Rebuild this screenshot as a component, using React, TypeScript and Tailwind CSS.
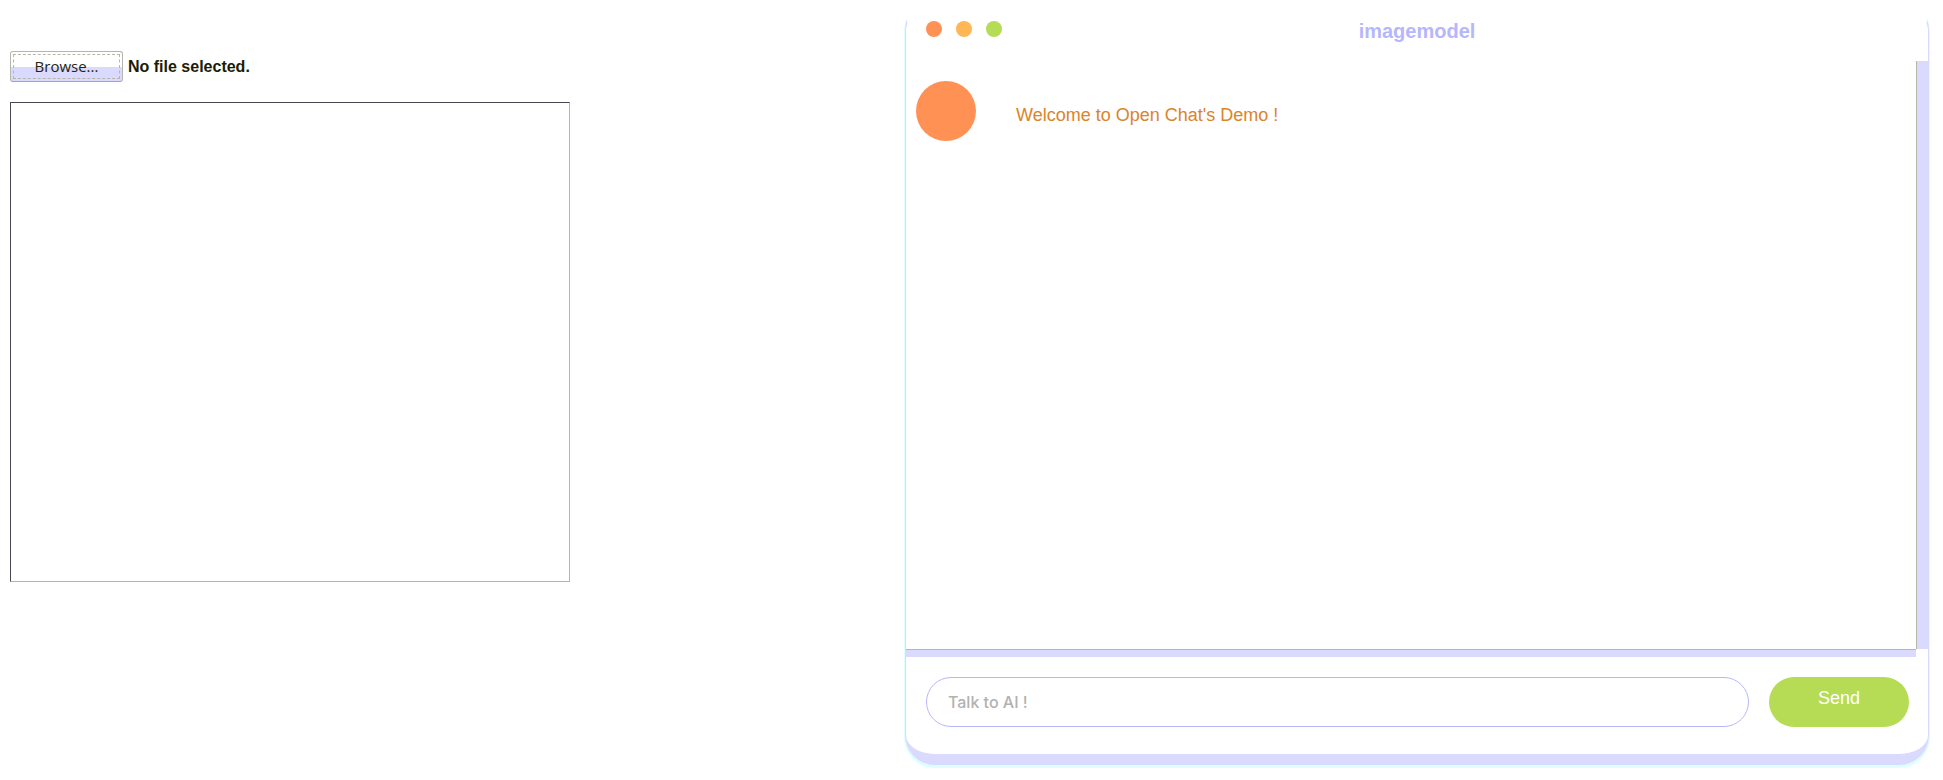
import { useRef, useState } from "react";

export default function App() {
  const fileInput = useRef<HTMLInputElement>(null);
  const [fileName, setFileName] = useState("No file selected.");
  const [message, setMessage] = useState("");

  return (
    <main className="grid min-h-screen grid-cols-[895fr_1024fr] items-start bg-white pr-[14px] pb-4 pl-[10px] font-['Liberation_Sans',sans-serif]">
      <section className="pt-[51px]">
        <div className="flex items-center gap-[5px]">
          <button
            type="button"
            onClick={() => fileInput.current?.click()}
            className="h-[31px] w-[113px] rounded-[3px] border border-[#b6b6ac] border-b-[#a2a2b8] bg-linear-to-b from-white from-50% to-[#dadaff] to-50% p-[2px] text-[#24240f]"
          >
            <span className="flex h-full items-center justify-center border border-dashed border-[#b6b6a8] font-['Open_Sans',sans-serif] text-[15px]">
              Browse...
            </span>
          </button>
          <input
            ref={fileInput}
            type="file"
            aria-label="Browse"
            className="hidden"
            onChange={(e) => setFileName(e.target.files?.[0]?.name ?? "No file selected.")}
          />
          <span className="text-[16px] font-bold text-[#1c1c04]">{fileName}</span>
        </div>
        <div className="mt-5 h-[480px] max-w-[560px] border border-t-[#484854] border-r-[#b6b6aa] border-b-[#b6b6aa] border-l-[#484854]" />
      </section>

      <section className="flex flex-col rounded-[30px] border-x border-t-10 border-b-11 border-x-[#dadaff] border-t-white border-b-[#dadaff] bg-white shadow-[0_2px_1px_1px_#dafffe]">
        <header className="grid h-[51px] grid-cols-[1fr_auto_1fr] items-start px-5">
          <div className="flex gap-[14px] pt-[11px]">
            <span className="size-4 rounded-full bg-[#ff9155]" />
            <span className="size-4 rounded-full bg-[#ffb655]" />
            <span className="size-4 rounded-full bg-[#b6dc55]" />
          </div>
          <h1 className="pt-[9px] text-[20px] leading-6 font-bold text-[#b6b6ff]">imagemodel</h1>
        </header>

        <div className="grid grid-cols-[1fr_12px]">
          <div className="h-[588px]">
            <div className="flex items-center gap-10 pt-5 pl-[10px]">
              <span className="size-[60px] rounded-full bg-[#ff9155]" />
              <p className="pt-2 text-[18px] text-[#da842c]">Welcome to Open Chat's Demo !</p>
            </div>
          </div>
          <div className="border-l border-[#b6b6aa] bg-[#dadaff]" />
          <div className="h-2 border-t border-[#b6b6aa] bg-[#dadaff]" />
        </div>

        <form
          className="flex gap-5 pt-5 pr-[19px] pb-[27px] pl-5"
          onSubmit={(e) => {
            e.preventDefault();
            setMessage("");
          }}
        >
          <input
            type="text"
            aria-label="Message"
            placeholder="Talk to AI !"
            value={message}
            onChange={(e) => setMessage(e.target.value)}
            className="h-[50px] min-w-0 flex-1 rounded-[25px] border border-[#b6b6ff] px-[21px] font-['Inter',sans-serif] text-[16px] font-medium text-[#24240f] outline-none placeholder:text-[#b2b2b0]"
          />
          <button
            type="submit"
            className="h-[50px] w-[140px] rounded-[25px] bg-[#b6dc55] pb-2 text-[18px] text-white"
          >
            Send
          </button>
        </form>
      </section>
    </main>
  );
}
